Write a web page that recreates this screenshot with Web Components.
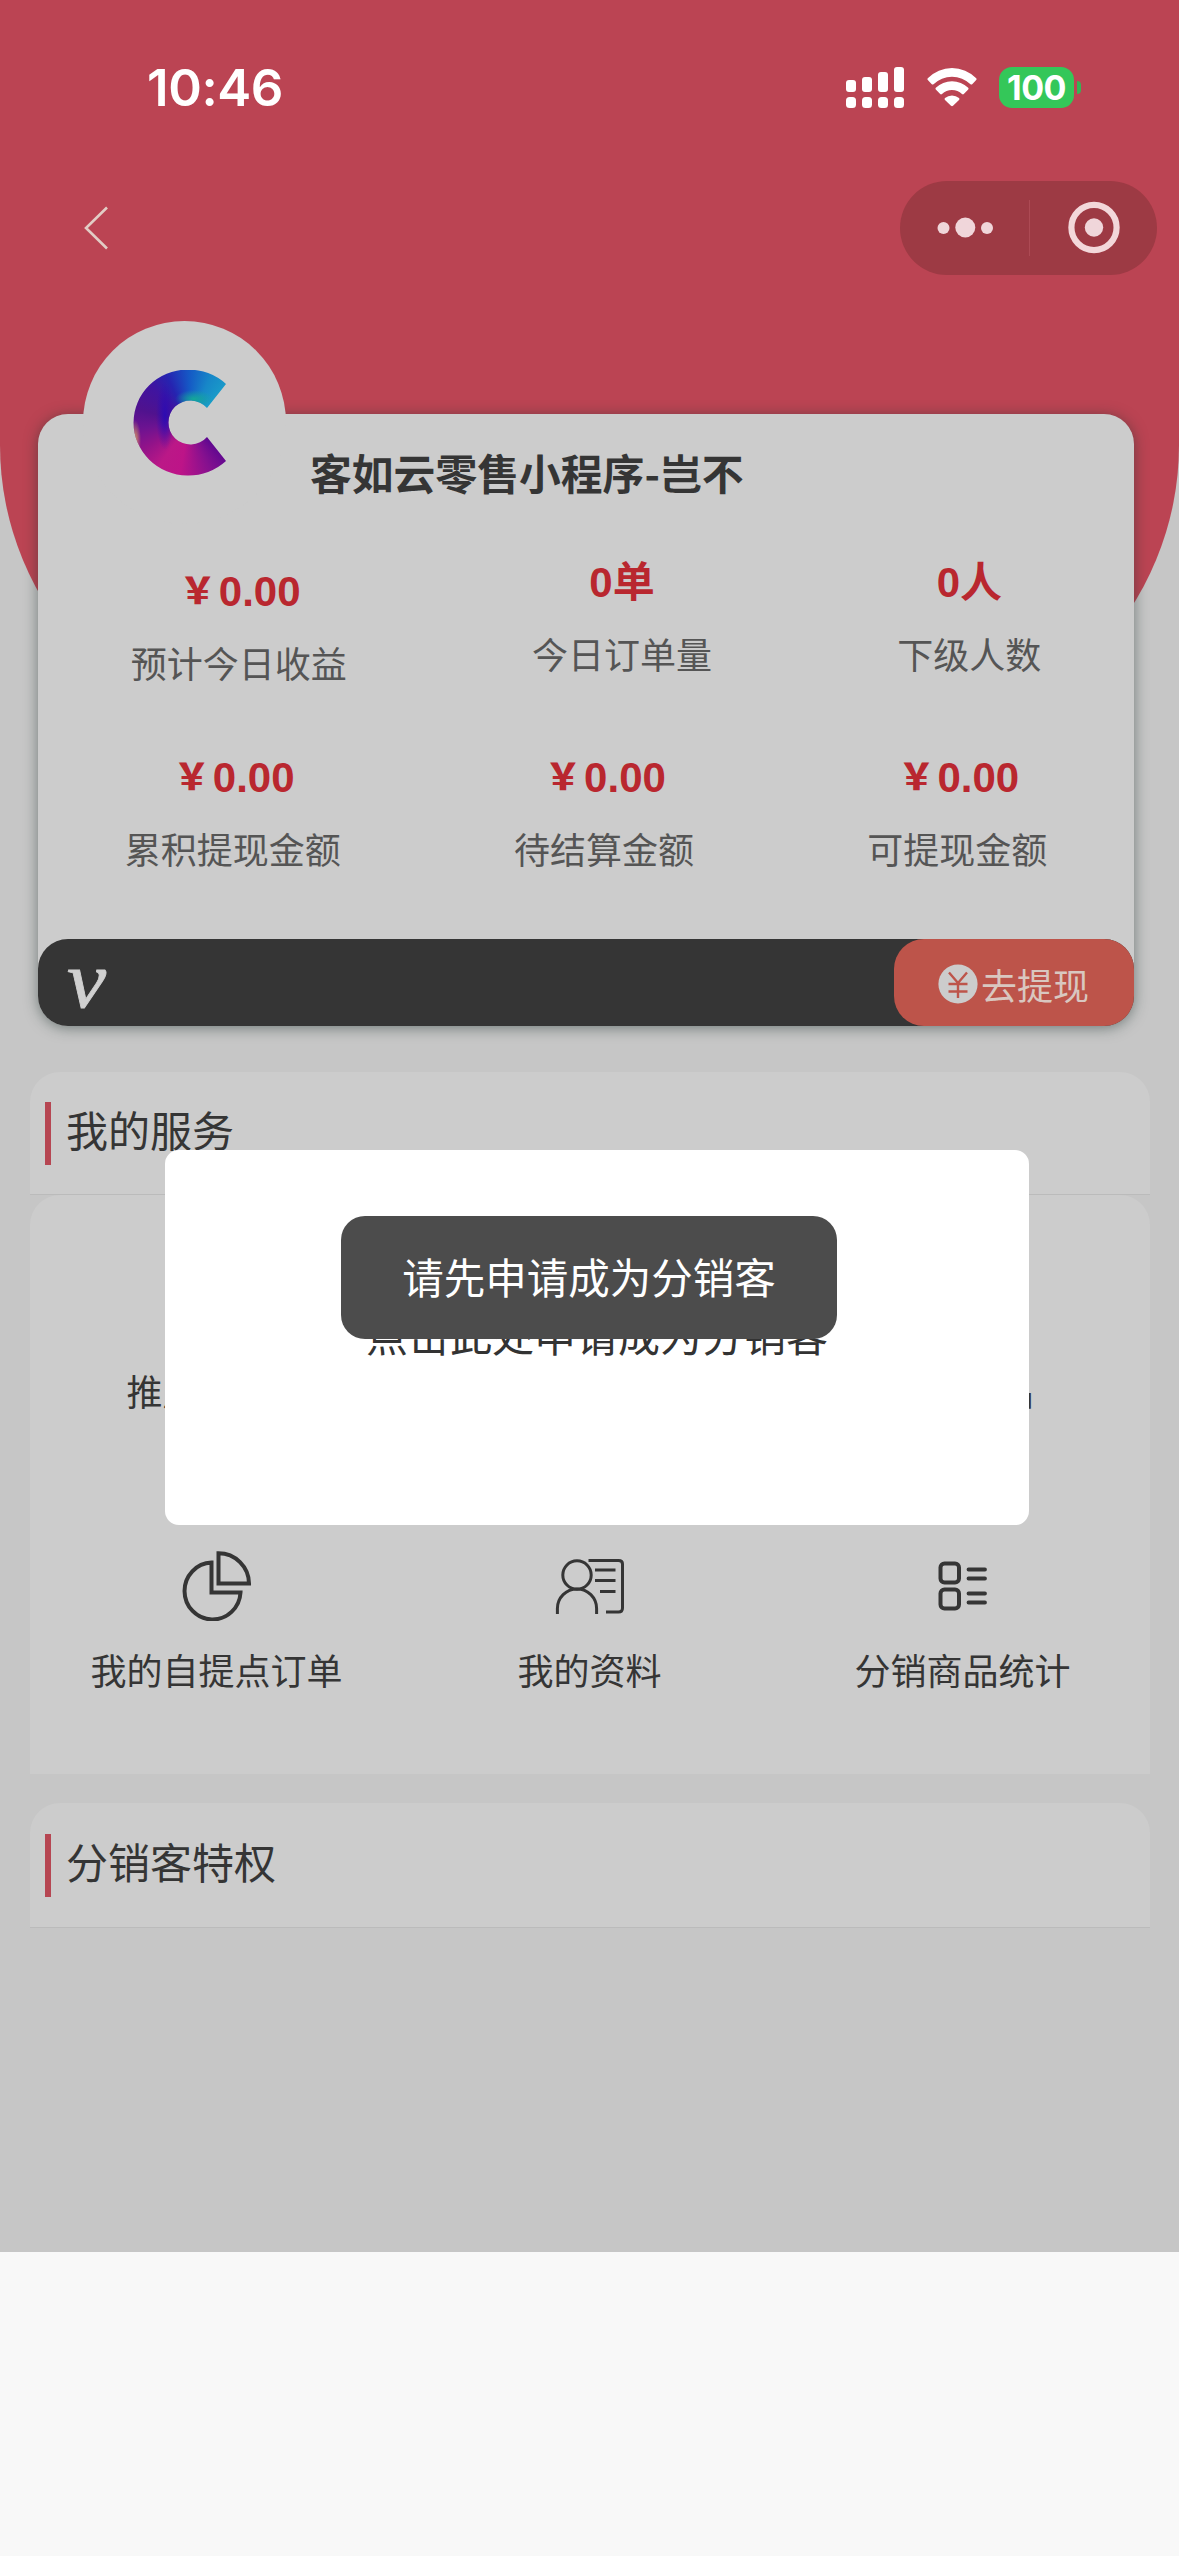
<!DOCTYPE html>
<html lang="zh-CN">
<head>
<meta charset="utf-8">
<title>分销中心</title>
<style>
html,body{margin:0;padding:0;background:#f8f8f8}
body{width:1179px;height:2556px;overflow:hidden;font-family:"Liberation Sans","Noto Sans CJK SC",sans-serif;color:#353535}
</style>
</head>
<body>
<distributor-page></distributor-page>
<script>
const define = (name, html) => customElements.define(name, class extends HTMLElement {
  constructor() {
    super();
    const t = document.createElement('template');
    t.innerHTML = html;
    this.attachShadow({mode: 'open'}).appendChild(t.content.cloneNode(true));
  }
});

define('status-bar', `
<style>
:host{display:flex;align-items:center;justify-content:space-between;height:176px;box-sizing:border-box;padding:0 98px 0 147px;color:#fff}
.time{font:600 51px/60px Inter,sans-serif;letter-spacing:-.4px}
.icons{display:flex;align-items:center;margin-top:-1px}
svg{display:block}
.wifi{margin-left:23px}
.batt{margin-left:22px;display:flex;align-items:center;gap:3px}
.cell{width:75px;height:41px;border-radius:13px;background:#34c759;font:700 34px/41px Inter,sans-serif;text-align:center;letter-spacing:-.5px}
.nub{width:4px;height:13px;border-radius:0 4px 4px 0;background:#34b455}
</style>
<div class="time">10:46</div>
<div class="icons">
<svg width="58" height="41" viewBox="0 0 58 41" fill="#fff"><rect x="0" y="13" width="10" height="12" rx="3"/><rect x="16" y="10" width="10" height="15" rx="3"/><rect x="32" y="5" width="10" height="20" rx="3"/><rect x="48" y="0" width="10" height="25" rx="3"/><rect x="0" y="30" width="10" height="11" rx="3.500"/><rect x="16" y="30" width="10" height="11" rx="3.500"/><rect x="32" y="30" width="10" height="11" rx="3.500"/><rect x="48" y="30" width="10" height="11" rx="3.500"/></svg>
<svg class="wifi" width="50" height="41" viewBox="0 0 50 41" fill="#fff"><path d="M.8 11.200Q0 12 .8 13L4.800 17.200Q5.600 18 6.500 17.200A26.500 26.500 0 0 1 43.500 17.200Q44.400 18 45.200 17.200L49.200 13Q50 12 49.200 11.200A34 34 0 0 0 .8 11.200Z"/><path d="M8.800 20.800Q8 21.800 8.800 22.600L13.200 27Q14 27.800 15 27A14.500 14.500 0 0 1 35 27Q36 27.800 36.800 27L41.200 22.600Q42 21.800 41.200 20.800A23.200 23.200 0 0 0 8.800 20.800Z"/><path d="M18 31Q17 32 18 33L24 38.800Q25 39.700 26 38.800L32 33Q33 32 32 31A11 11 0 0 0 18 31Z"/></svg>
<div class="batt"><div class="cell">100</div><div class="nub"></div></div>
</div>`);

define('nav-bar', `
<style>
:host{display:flex;align-items:center;justify-content:space-between;height:103px;box-sizing:border-box;padding:0 22px 0 82px}
svg{display:block}
.capsule{width:257px;height:94px;border-radius:47px;background:#9d3a44}
</style>
<svg width="28" height="46" viewBox="0 0 28 46" fill="none" stroke="#e2cdc5" stroke-width="2.600"><path d="M25 2.500 4 23 25 43.500"/></svg>
<div class="capsule"><svg width="257" height="94" viewBox="0 0 257 94"><g fill="#f0d6da"><circle cx="43.500" cy="47" r="6"/><circle cx="65.300" cy="46.500" r="10"/><circle cx="87" cy="47" r="6"/><circle cx="194" cy="46.500" r="9.200"/></g><circle cx="194" cy="46.500" r="22.600" fill="none" stroke="#f3d7da" stroke-width="6.200"/><path d="M129.500 19V75" stroke="#ad4a54" stroke-width="1"/></svg></div>`);

define('brand-avatar', `
<style>
:host{display:block;width:203px;height:203px;border-radius:50%;background:#ccc}
.logo{margin-left:48px;width:97px;height:108px;
clip-path:path("M95 14A54.800 53 0 1 0 95 91L76 67A22 22 0 1 1 76 38Z");
background:radial-gradient(ellipse 19px 9px at 63px 29px,#14a898,transparent),radial-gradient(ellipse 9px 34px at 34px 46px,rgba(38,10,185,.85),transparent),
radial-gradient(ellipse 6px 20px at 4px 70px,#d39a62,transparent),
conic-gradient(from 0deg at 58px 53px,#1558c5 0,#1787c8 25deg,#1a9fc9 50deg,#5b0890 110deg,#5c0790 130deg,#84108f 155deg,#bd1488 190deg,#bb1887 215deg,#931389 240deg,#6c1391 264deg,#50128e 285deg,#3f14a0 315deg,#2623b0 335deg,#1558c5 360deg)}
:host{box-sizing:border-box;padding-top:49px}
</style><div class="logo"></div>`);

define('stat-item', `
<style>
:host{display:flex;flex-direction:column;align-items:center}
.v{font-weight:700;font-size:42px;line-height:48px;height:48px;color:#b9272f;white-space:nowrap}
.l{font-size:36px;line-height:48px;height:48px;margin-top:22px;color:#555;white-space:nowrap;font-family:"Noto Sans CJK SC",sans-serif}
</style>
<div class="v"><slot name="value"></slot></div><div class="l"><slot></slot></div>`);

define('income-card', `
<style>
:host{display:flex;flex-direction:column;position:relative;margin:135px 45px 0 38px;height:612px;border-radius:30px;background:#ccc;box-shadow:0 2px 14px rgba(30,50,45,.5)}
brand-avatar{position:absolute;left:45px;top:-93px}
h1{margin:28px 0 0 272px;font:700 41.8px/60px "Noto Sans CJK SC",sans-serif;color:#353535;white-space:nowrap}
.row{display:flex;justify-content:space-around;align-items:flex-start}
.r1{margin-top:57px}
.first{margin-top:9px}
.r2{margin-top:68px}
b{display:inline-block;width:42px;height:48px;line-height:48px;vertical-align:top;text-align:center;font-size:36px}
.bar{margin-top:auto;height:87px;border-radius:30px;background:#353535;display:flex;justify-content:space-between;align-items:center}
.v{font:italic 400 80px/87px "Liberation Serif",serif;color:#d0d0d0;margin-left:29px;height:87px;-webkit-text-stroke:.8px #d0d0d0}
.v span{display:block;margin-top:-2px;transform:scaleX(1.100);transform-origin:0 50%}
.btn{width:240px;height:87px;border-radius:30px;background:#bd544a;display:flex;align-items:center;justify-content:center;gap:3px;color:#d9c7c0;font:400 36px/60px "Noto Sans CJK SC",sans-serif;box-sizing:border-box;padding:4px 1px 0 0}
.btn span{display:block;margin-top:-1px}
.btn svg{display:block;margin-top:-2px}
</style>
<h1>客如云零售小程序-岂不</h1>
<div class="row r1">
<stat-item class="first"><span slot="value"><b>&#xFFE5;</b>0.00</span>预计今日收益</stat-item>
<stat-item><span slot="value">0单</span>今日订单量</stat-item>
<stat-item><span slot="value">0人</span>下级人数</stat-item>
</div>
<div class="row r2">
<stat-item><span slot="value"><b>&#xFFE5;</b>0.00</span>累积提现金额</stat-item>
<stat-item><span slot="value"><b>&#xFFE5;</b>0.00</span>待结算金额</stat-item>
<stat-item><span slot="value"><b>&#xFFE5;</b>0.00</span>可提现金额</stat-item>
</div>
<div class="bar"><div class="v"><span>v</span></div>
<div class="btn"><svg width="40" height="40" viewBox="0 0 40 40"><circle cx="20" cy="20" r="19.600" fill="#ccc"/><path d="M11 8.500 20 19 29 8.500M10.500 20H29.500M10.500 27.500H29.500M20 19V34" fill="none" stroke="#bd544a" stroke-width="2.400"/></svg><span>去提现</span></div></div>
<brand-avatar></brand-avatar>`);

define('section-head', `
<style>
:host{display:flex;align-items:center;height:122px;margin:0 29px 0 30px;padding-left:15px;background:#ccc;border-radius:30px 30px 0 0;border-bottom:1px solid #bbb;gap:15px;font:400 42px/60px "Noto Sans CJK SC",sans-serif;color:#353535}
i{width:6px;height:63px;background:#b64652}
span{display:block;margin-top:-8px}
</style><i></i><span><slot></slot></span>`);

define('service-item', `
<style>
:host{display:flex;flex-direction:column;align-items:center;height:279px;font:400 36px/52px "Noto Sans CJK SC",sans-serif;color:#353535;white-space:nowrap}
.ic{height:70px;display:flex;align-items:center}
.tx{margin-top:22px}
</style><div class="ic"><slot name="icon"></slot></div><div class="tx"><slot></slot></div>`);

define('service-grid', `
<style>
:host{display:grid;grid-template-columns:repeat(3,1fr);grid-template-rows:279px 279px;box-sizing:border-box;height:579px;margin:0 29px 0 30px;padding:77px 1px 0 0;background:#ccc;border-radius:30px 30px 0 0}
svg{display:block;fill:none;stroke:#353535}
.w{display:block;width:180px}.r{display:block;width:142px;text-align:right}
</style>
<service-item><span class="w">推广</span></service-item>
<span></span>
<service-item><span class="r">品</span></service-item>
<service-item><svg slot="icon" width="70" height="70" viewBox="0 0 70 70" stroke-width="4"><path d="M36.500 2.200V32.500H67A30.500 30.500 0 0 0 36.500 2.200Z"/><path d="M29.500 11.500A28 28.500 0 1 0 58.500 41.500H29.500Z"/></svg>我的自提点订单</service-item>
<service-item><svg slot="icon" width="70" height="56" viewBox="0 0 70 56" stroke-width="3"><circle cx="22" cy="17" r="14.200"/><path d="M2.400 56V50.500A19.600 19.600 0 0 1 41.600 50.500V56M33.500 2.500H63.500Q67.500 2.500 67.500 6V50Q67.500 54 63.500 54H51M40 12H60.500M40 22.500H60.500M45 33.500H60.500"/></svg>我的资料</service-item>
<service-item><svg slot="icon" width="50" height="50" viewBox="0 0 50 50" stroke-width="4" stroke-linecap="round"><rect x="2.500" y="2.500" width="18.500" height="19" rx="4"/><rect x="2.500" y="28.500" width="18.500" height="19" rx="4"/><path d="M30.500 8.500H47M30.500 17.500H47M30.500 32.500H47M30.500 41.500H47" stroke-width="3.800"/></svg>分销商品统计</service-item>`);

define('apply-modal', `
<style>
:host{position:absolute;left:165px;top:1150px;width:864px;height:375px;border-radius:14px;background:#fff;display:flex;align-items:center;justify-content:center;font:400 42px/60px "Noto Sans CJK SC",sans-serif;color:#333;white-space:nowrap}
span{display:block;margin-top:-7px}
</style><span><slot></slot></span>`);

define('toast-tip', `
<style>
:host{position:absolute;left:341px;top:1216px;width:496px;height:123px;border-radius:24px;background:#4c4c4c;display:flex;align-items:center;justify-content:center;font:400 41.500px/60px "Noto Sans CJK SC",sans-serif;color:#fff;white-space:nowrap}
span{display:block;margin-top:-3px}
</style><span><slot></slot></span>`);

define('distributor-page', `
<style>
:host{display:block;position:relative;width:1179px;height:2252px;background:#c6c6c6}
.bg{position:absolute;left:0;top:0;width:1179px;height:745px;background:#bb4453;border-radius:0 0 300px 300px}
.flow{position:relative;display:flex;flex-direction:column}
.s1{margin-top:46px}.s2{margin-top:29px;height:124px}
</style>
<div class="bg"></div>
<div class="flow">
<status-bar></status-bar>
<nav-bar></nav-bar>
<income-card></income-card>
<section-head class="s1">我的服务</section-head>
<service-grid></service-grid>
<section-head class="s2">分销客特权</section-head>
</div>
<apply-modal>点击此处申请成为分销客</apply-modal>
<toast-tip>请先申请成为分销客</toast-tip>`);
</script>
</body>
</html>
